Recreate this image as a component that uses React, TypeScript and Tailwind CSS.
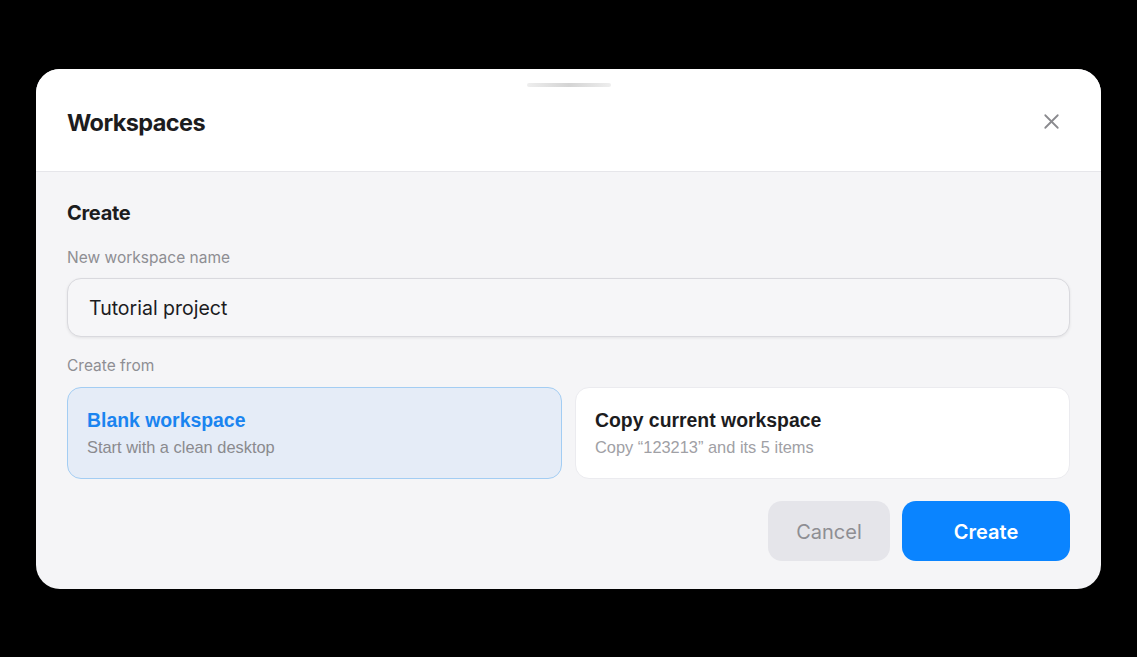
import { X } from "lucide-react";

const ui = { fontFamily: "Inter, 'Noto Sans', sans-serif" };
const arial = { fontFamily: "'Liberation Sans', Arial, sans-serif" };

export default function App() {
  return (
    <div className="flex h-screen w-screen items-center justify-center bg-black" style={ui}>
      <div className="w-[1065px] overflow-hidden rounded-[24px] bg-[#f5f5f7]">
        {/* Header */}
        <div className="relative flex h-[103px] items-center justify-between border-b border-[#e6e6ea] bg-white pl-[31px] pr-[37px]">
          <div className="absolute left-1/2 top-[14px] h-[4px] w-[84px] -translate-x-1/2 rounded-full bg-gradient-to-r from-[#eeeeee] via-[#d4d4d4] to-[#eeeeee]" />
          <h1 className="pt-[7px] text-[23.5px] font-bold tracking-[-0.6px] text-[#1c1c1e]">Workspaces</h1>
          <button className="pt-[3px] text-[#8a8a8e]">
            <X size={25} strokeWidth={1.7} />
          </button>
        </div>

        {/* Body */}
        <div className="px-[31px] pb-[28px] pt-[27px]">
          <h2 className="text-[20px] font-bold leading-[28px] tracking-[-0.3px] text-[#1c1c1e]">Create</h2>

          <label className="mt-[21px] block text-[15.5px] leading-[20px] text-[#8e8e93]">New workspace name</label>
          <div className="mt-[10px] flex h-[59px] items-center rounded-[14px] border border-[#d9d9de] bg-[#f6f6f8] px-[21px] pt-[3px] shadow-[0_1px_3px_rgba(0,0,0,0.08)]">
            <span className="text-[19.5px] text-[#1c1c1e]">Tutorial project</span>
          </div>

          <label className="mt-[19px] block text-[15.5px] leading-[20px] text-[#8e8e93]">Create from</label>
          <div className="mt-[11px] grid grid-cols-2 gap-[13px]" style={arial}>
            <div className="flex h-[92px] flex-col justify-center rounded-[14px] border border-[#a3cdf3] bg-[#e5ecf7] px-[19px]">
              <div className="text-[19.4px] font-bold leading-[24px] text-[#1a84f0]">Blank workspace</div>
              <div className="mt-[5px] text-[16.4px] leading-[20px] text-[#8a8a8e]">Start with a clean desktop</div>
            </div>
            <div className="flex h-[92px] flex-col justify-center rounded-[14px] border border-[#ebebef] bg-white px-[19px]">
              <div className="text-[19.4px] font-bold leading-[24px] text-[#1c1c1e]">Copy current workspace</div>
              <div className="mt-[5px] text-[16.4px] leading-[20px] text-[#a0a0a5]">Copy “123213” and its 5 items</div>
            </div>
          </div>

          <div className="mt-[22px] flex justify-end gap-[12px]">
            <button className="h-[60px] w-[122px] rounded-[14px] bg-[#e5e5ea] pt-[3px] text-[20px] text-[#8e8e93]">Cancel</button>
            <button className="h-[60px] w-[168px] rounded-[14px] bg-[#0a84ff] pt-[3px] text-[20px] font-semibold text-white">Create</button>
          </div>
        </div>
      </div>
    </div>
  );
}
